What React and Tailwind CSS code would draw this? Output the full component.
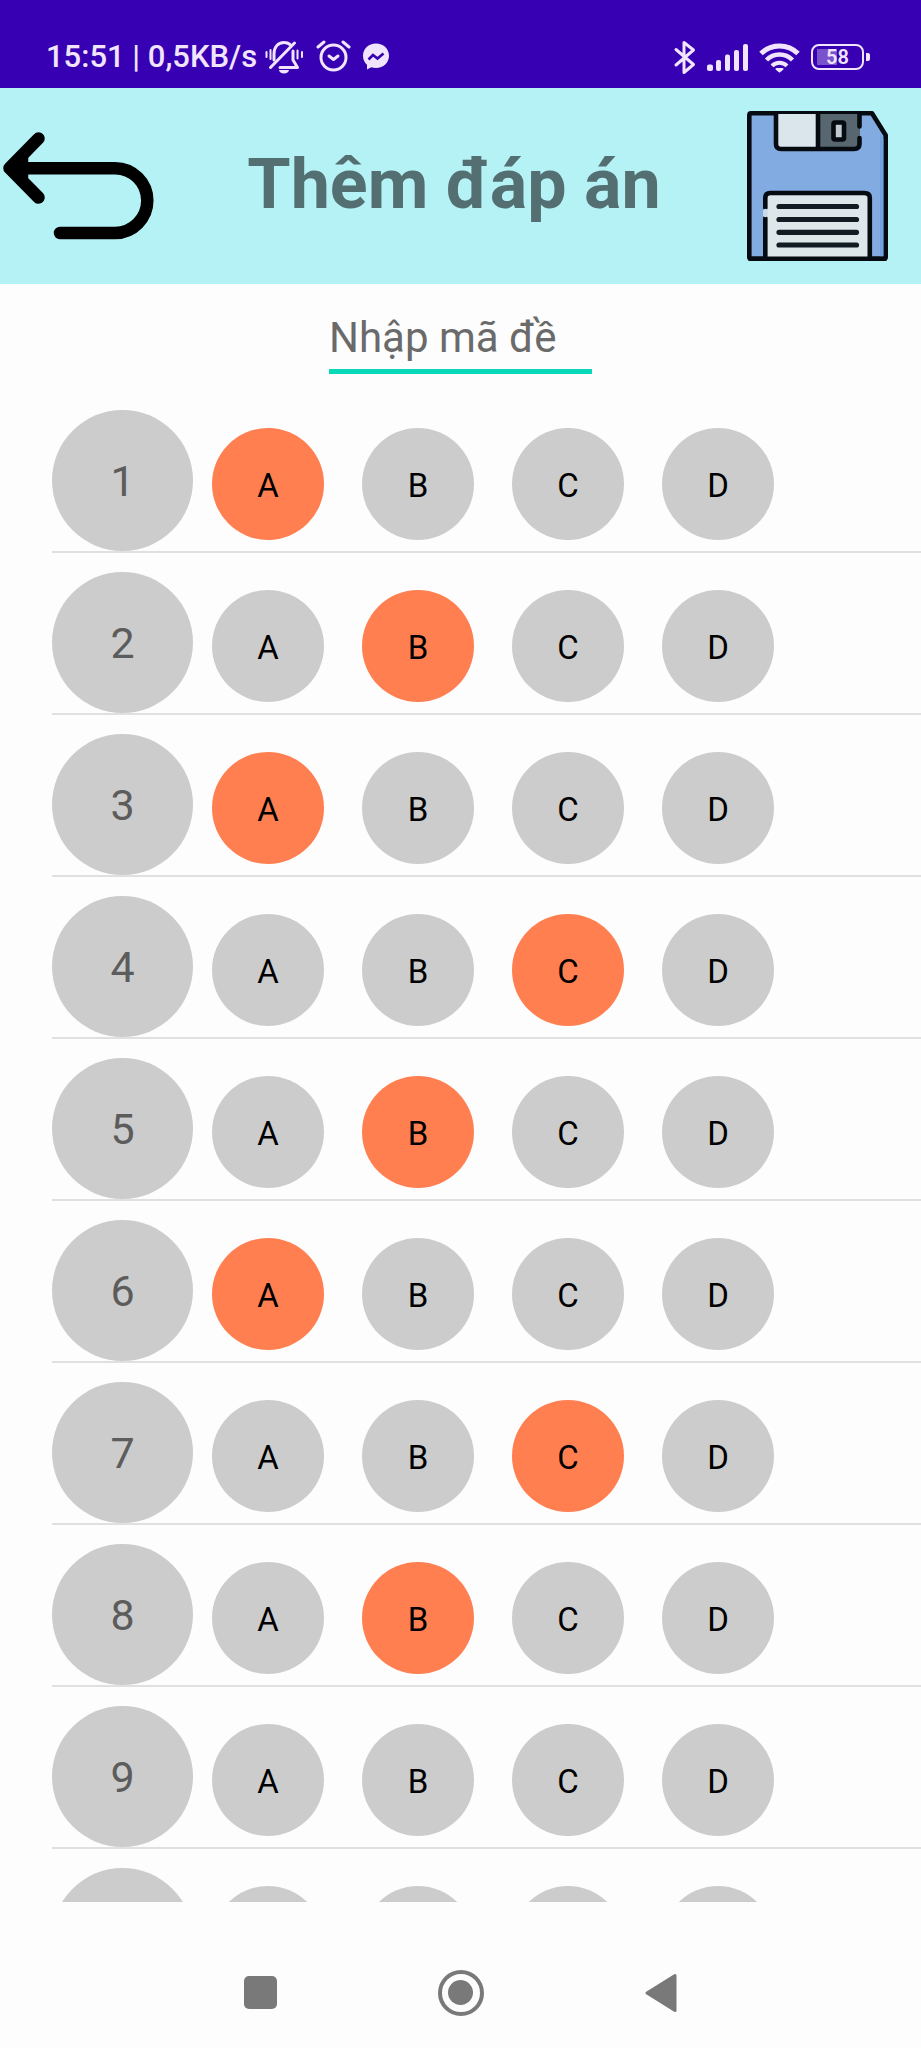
import { useState } from "react";

const CHOICES = ["A", "B", "C", "D"];
const INITIAL_ANSWERS = ["A", "B", "A", "C", "B", "A", "C", "B", null, null];

function SilentBellIcon() {
  return (
    <svg viewBox="265 40 39 34" className="h-[34px] w-[39px]" fill="none" stroke="currentColor" strokeWidth="3" strokeLinecap="round" aria-hidden="true">
      <path d="M274 60V54c0-7 4-11.500 10-11.500 2.500 0 4.500.7 6 2" />
      <path d="M293 51v9l4.500 7.500H280" strokeLinejoin="round" />
      <path d="M270.500 67.500 294.500 43" />
      <path d="M266.500 52v5M270.500 50v9M297.500 50.500v8M302 52v5" strokeWidth="2" />
      <path d="M279 70h10a5 3.500 0 0 1-10 0z" fill="currentColor" stroke="none" />
    </svg>
  );
}

function AlarmIcon() {
  return (
    <svg viewBox="315 40 35 34" className="h-[34px] w-[35px]" fill="none" stroke="currentColor" strokeWidth="3" strokeLinecap="round" aria-hidden="true">
      <circle cx="332.500" cy="57.500" r="12.500" />
      <path d="m317 47 6-5M342 42l6 5" />
      <path d="m328 56 4.500 3.500L337 56" strokeLinejoin="round" />
    </svg>
  );
}

function MessengerIcon() {
  return (
    <svg viewBox="363 40 26 34" className="h-[34px] w-[26px]" aria-hidden="true">
      <path fill="currentColor" d="M376 43.500c-7.500 0-13 5.300-13 12.300 0 3.700 1.500 6.800 4 9v4.700l4.300-2.200c1.500.4 3 .7 4.700.7 7.500 0 13-5.300 13-12.200s-5.500-12.300-13-12.300z" />
      <path d="m368.500 59.500 4.500-4.500 4.500 3.500 6-5" fill="none" stroke="#3700b3" strokeWidth="2.600" />
    </svg>
  );
}

function BluetoothIcon() {
  return (
    <svg viewBox="673 39 23 35" className="h-[35px] w-[23px]" fill="none" stroke="currentColor" strokeWidth="3" strokeLinecap="round" strokeLinejoin="round" aria-hidden="true">
      <path d="m676 48.500 17.500 15L684 71.500v-30l9.500 7.500L676 64" />
    </svg>
  );
}

function SignalIcon() {
  return (
    <svg viewBox="707 43 41 27" className="h-[27px] w-[41px]" fill="currentColor" aria-hidden="true">
      <rect x="707" y="63.500" width="6" height="6.500" rx="2" />
      <rect x="716" y="59" width="5" height="11" rx="2" />
      <rect x="725" y="53.500" width="5" height="16.500" rx="2" />
      <rect x="734" y="49" width="5" height="21" rx="2" />
      <rect x="743" y="43" width="5" height="27" rx="2" />
    </svg>
  );
}

function WifiIcon() {
  return (
    <svg viewBox="758 41 41 31" className="h-[31px] w-[41px]" fill="none" stroke="currentColor" strokeWidth="5" strokeLinecap="butt" aria-hidden="true">
      <path d="M760 52.500a26.500 26.500 0 0 1 37 0" />
      <path d="M765.500 59a18 18 0 0 1 26 0" strokeWidth="4.500" />
      <path d="M771 64.800a10.500 10.500 0 0 1 15 0" strokeWidth="4" />
      <path d="M775.500 68h6l-3 2.500z" fill="currentColor" strokeWidth="2" strokeLinejoin="round" />
    </svg>
  );
}

function Battery({ level }) {
  return (
    <div className="flex items-center gap-0.5">
      <div className="relative flex h-[26px] w-[53px] items-center justify-center rounded-[8px] border-2 border-current">
        <span className="absolute left-1 h-4 w-5 bg-[#7a52cc]" />
        <span className="relative text-[20px] leading-5 font-semibold">{level}</span>
      </div>
      <span className="h-2 w-1 rounded-r-[2px] bg-current" />
    </div>
  );
}

function BackIcon() {
  return (
    <svg viewBox="3 131 151 110" className="h-[110px] w-[151px]" fill="none" stroke="#000" strokeWidth="12.500" strokeLinecap="round" strokeLinejoin="round" aria-hidden="true">
      <path d="M38.500 138.500 9.500 168.200l29 29.300" />
      <path d="M12 168.200h103a32.300 32.400 0 0 1 0 64.800H60" />
      <path d="M22 159v18" />
    </svg>
  );
}

function SaveIcon() {
  return (
    <svg viewBox="747 111 141 150" className="h-[150px] w-[141px]" fill="none" stroke="#050b10" strokeWidth="4.600" strokeLinejoin="round" strokeLinecap="round" aria-hidden="true">
      <path d="M751 113.300h121l13.700 22v121.500q0 2-2 2H751.300q-2 0-2-2v-141.500q0-2 1.700-2z" fill="#82abe1" />
      <path d="M880 134l3.400 5v117.500H880z" fill="#6ea3df" stroke="none" />
      <path d="M776 114h42v35h-37q-5 0-5-5z" fill="#dbe5ec" stroke="none" />
      <path d="M818 114h42v30q0 5-5 5h-37z" fill="#58666f" stroke="none" />
      <path d="M776 114v30q0 5 5 5h73q5.500 0 5.500-5v-6M859.500 126.500V114M818 114v35" />
      <rect x="833.500" y="122.500" width="10.500" height="17" rx="1.500" fill="#c0cacf" />
      <path d="M765.300 258v-61q0-4 4-4h96q4.500 0 4.500 4v61z" fill="#dde6e9" stroke="none" />
      <path d="M765.300 258v-40M765.300 208v-10q0-5 5-5h94q5.500 0 5.500 5v60" />
      <path d="M765.300 211v4" stroke="#c8d8e8" />
      <path d="M779 206.500h77.500M779 219.500h77.500M779 232.300h77.500M779 245h77.500" stroke="#111c22" strokeWidth="5.200" />
      <path d="M750 258.700h135" />
    </svg>
  );
}

function StatusBar() {
  return (
    <div className="flex h-[88px] shrink-0 items-center justify-between bg-[#3700b3] pt-[26px] pr-[51px] pl-[46px] text-[#f1e4fd]">
      <div className="flex items-center">
        <span className="text-[31px] leading-9 font-medium">15:51 | 0,5KB/s</span>
        <span className="ml-2 flex items-center gap-3">
          <SilentBellIcon />
          <AlarmIcon />
          <MessengerIcon />
        </span>
      </div>
      <div className="flex items-center gap-[11px]">
        <BluetoothIcon />
        <SignalIcon />
        <WifiIcon />
        <Battery level={58} />
      </div>
    </div>
  );
}

function Header() {
  return (
    <header className="flex h-[196px] shrink-0 items-center bg-[#b5f2f6]">
      <button type="button" aria-label="Quay lại" className="w-[161px] shrink-0 pl-[3px]">
        <BackIcon />
      </button>
      <h1 className="min-w-0 flex-1 pb-1 text-center text-[70px] leading-[82px] font-bold text-[#546f72]">Thêm đáp án</h1>
      <button type="button" aria-label="Lưu" className="w-[174px] shrink-0">
        <SaveIcon />
      </button>
    </header>
  );
}

function AnswerRow({ number, answer, onSelect }) {
  return (
    <li className="flex items-start border-b-2 border-[#e0e0e0] pt-[19px]">
      <span className="mr-[19px] flex size-[141px] shrink-0 items-center justify-center rounded-full bg-[#cccccc] text-[43px] leading-[50px] text-[#5c5c5c]">
        {number}
      </span>
      <div role="group" aria-label={`Câu ${number}`} className="flex gap-[38px] pt-[18px]">
        {CHOICES.map((choice) => (
          <button
            key={choice}
            type="button"
            aria-pressed={answer === choice}
            onClick={() => onSelect(choice)}
            className={`flex size-[112px] items-center justify-center rounded-full pt-1 text-[33px] leading-10 text-black ${
              answer === choice ? "bg-[#ff7f50]" : "bg-[#cccccc]"
            }`}
          >
            {choice}
          </button>
        ))}
      </div>
    </li>
  );
}

function NavigationBar() {
  return (
    <nav className="flex h-[146px] shrink-0 items-center justify-center gap-[152px] pt-[35px] text-[#797979]">
      <button type="button" aria-label="Ứng dụng gần đây" className="flex size-12 items-center justify-center">
        <span className="size-[33px] rounded-[5px] bg-current" />
      </button>
      <button type="button" aria-label="Màn hình chính" className="flex size-12 items-center justify-center">
        <span className="flex size-[46px] items-center justify-center rounded-full border-4 border-current">
          <span className="size-[25px] rounded-full bg-current" />
        </span>
      </button>
      <button type="button" aria-label="Trở lại" className="flex size-12 items-center justify-center">
        <svg viewBox="0 0 32 40" className="h-10 w-8" fill="currentColor" stroke="currentColor" strokeWidth="3" strokeLinejoin="round" aria-hidden="true">
          <path d="M2 20 30 2.500v35z" />
        </svg>
      </button>
    </nav>
  );
}

export default function App() {
  const [answers, setAnswers] = useState(INITIAL_ANSWERS);
  const [code, setCode] = useState("");

  const select = (index, choice) =>
    setAnswers((current) => current.map((value, i) => (i === index ? choice : value)));

  return (
    <div className="flex h-screen flex-col bg-[#fdfdfd] font-['Roboto',sans-serif]">
      <StatusBar />
      <Header />
      <main className="flex min-h-0 flex-1 flex-col">
        <div className="flex shrink-0 justify-center pt-[30px] pb-[17px]">
          <input
            type="text"
            aria-label="Nhập mã đề"
            placeholder="Nhập mã đề"
            value={code}
            onChange={(event) => setCode(event.target.value)}
            className="h-[60px] w-[263px] border-b-[5px] border-[#0ad9b9] bg-transparent pb-2 text-[42px] text-[#222222] outline-none placeholder:text-[#6a6a6a]"
          />
        </div>
        <ol className="min-h-0 flex-1 overflow-y-auto pl-[52px] [scrollbar-width:none]">
          {answers.map((answer, index) => (
            <AnswerRow key={index} number={index + 1} answer={answer} onSelect={(choice) => select(index, choice)} />
          ))}
        </ol>
      </main>
      <NavigationBar />
    </div>
  );
}
